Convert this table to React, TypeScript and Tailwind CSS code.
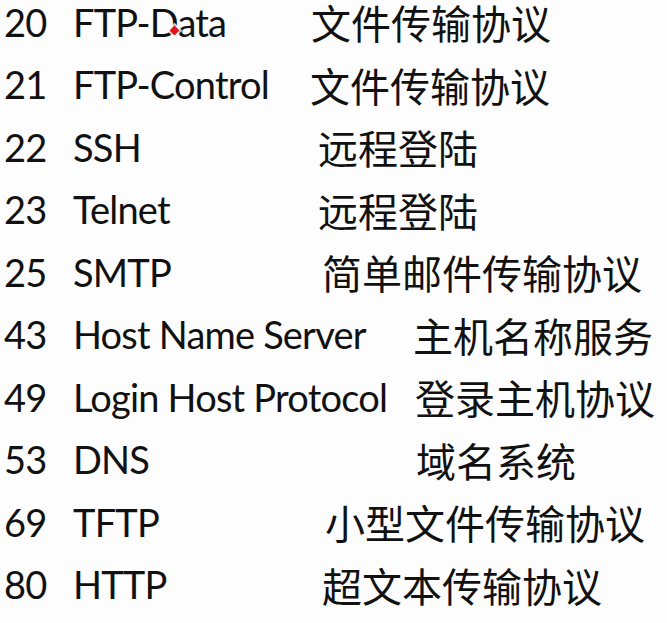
const rows = [
  { port: '20', name: 'FTP-Data', zh: '文件传输协议', left: 'w-[311px]' },
  { port: '21', name: 'FTP-Control', zh: '文件传输协议', left: 'w-[310px]' },
  { port: '22', name: 'SSH', zh: '远程登陆', left: 'w-[318px]' },
  { port: '23', name: 'Telnet', zh: '远程登陆', left: 'w-[318px]' },
  { port: '25', name: 'SMTP', zh: '简单邮件传输协议', left: 'w-[322px]' },
  { port: '43', name: 'Host Name Server', zh: '主机名称服务', left: 'w-[413px]' },
  { port: '49', name: 'Login Host Protocol', zh: '登录主机协议', left: 'w-[415px]' },
  { port: '53', name: 'DNS', zh: '域名系统', left: 'w-[416px]' },
  { port: '69', name: 'TFTP', zh: '小型文件传输协议', left: 'w-[325px]' },
  { port: '80', name: 'HTTP', zh: '超文本传输协议', left: 'w-[322px]' },
]

export default function App() {
  return (
    <div className="relative w-[667px] h-[623px] overflow-hidden bg-[#fdfdfd] text-[#111]">
      <div className="mt-[-9px] flex flex-col">
        {rows.map((r) => (
          <div key={r.port} className="flex h-[62.5px] items-center">
            <div className={`${r.left} flex shrink-0 items-center font-['Lato',sans-serif] text-[38px] leading-normal tracking-[-0.8px]`}>
              <span className="w-[73px] pl-[4px]">{r.port}</span>
              <span className="whitespace-nowrap">{r.name}</span>
            </div>
            <span className="whitespace-nowrap font-['Noto_Sans_CJK_SC',sans-serif] text-[40px] leading-normal">
              {r.zh}
            </span>
          </div>
        ))}
      </div>
      {/* laser pointer dot */}
      <div className="absolute left-[171px] top-[27px] h-[7px] w-[7px] rotate-45 bg-[#e0141e] ring-2 ring-white/80" />
    </div>
  )
}
